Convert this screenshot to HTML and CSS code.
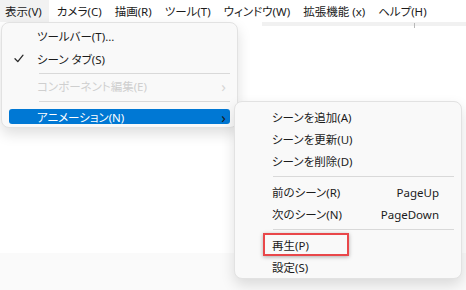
FILE: index.html
```html
<!DOCTYPE html>
<html lang="ja">
<head>
  <meta charset="UTF-8" />
  <title>メニュー</title>
  <link rel="stylesheet" href="styles.css">
</head>
<body>
  <div class="menubar">
    <div class="menubar-item active">表示(V)</div>
    <div class="menubar-item">カメラ(C)</div>
    <div class="menubar-item">描画(R)</div>
    <div class="menubar-item">ツール(T)</div>
    <div class="menubar-item">ウィンドウ(W)</div>
    <div class="menubar-item">拡張機能 (x)</div>
    <div class="menubar-item">ヘルプ(H)</div>
  </div>

  <div class="workspace">
    <div class="toolstrip"><span class="tick"></span></div>
    <div class="canvas"></div>
    <div class="footer-strip"></div>

    <!-- 表示 menu -->
    <div class="menu menu-view">
      <div class="item tall"><span class="check"></span><span class="label">ツールバー(T)...</span></div>
      <div class="item tall">
        <span class="check">
          <svg width="10" height="9" viewBox="0 0 10 9"><path d="M1 4.8 L3.8 7.6 L9 1.2" fill="none" stroke="#2a2a2a" stroke-width="1.3" stroke-linecap="round" stroke-linejoin="round"/></svg>
        </span>
        <span class="label">シーン タブ(S)</span>
      </div>
      <div class="sep sep-a"></div>
      <div class="item short disabled"><span class="check"></span><span class="label">コンポーネント編集(E)</span><span class="arrow">&#8250;</span></div>
      <div class="sep sep-b"></div>
      <div class="item hl"><span class="check"></span><span class="label">アニメーション(N)</span><span class="arrow">&#8250;</span></div>
    </div>

    <!-- アニメーション submenu -->
    <div class="menu menu-anim">
      <div class="item"><span class="label">シーンを追加(A)</span></div>
      <div class="item"><span class="label">シーンを更新(U)</span></div>
      <div class="item"><span class="label">シーンを削除(D)</span></div>
      <div class="sep"></div>
      <div class="item"><span class="label">前のシーン(R)</span><span class="key">PageUp</span></div>
      <div class="item"><span class="label">次のシーン(N)</span><span class="key">PageDown</span></div>
      <div class="sep"></div>
      <div class="item marked"><span class="label">再生(P)</span></div>
      <div class="item"><span class="label">設定(S)</span></div>
    </div>
  </div>
</body>
</html>
```

FILE: styles.css
```css
body {
  margin: 0;
  width: 466px;
  height: 290px;
  overflow: hidden;
  background: #ffffff;
  font-family: 'Noto Sans', 'Noto Sans CJK JP', sans-serif;
  font-size: 11.5px;
  font-feature-settings: 'palt';
  color: #1b1b1b;
}

.menubar {
  display: flex;
  height: 22px;
  align-items: stretch;
  background: #ffffff;
}

.menubar-item {
  display: flex;
  align-items: center;
  padding: 0 5px 0 5px;
  margin-right: 3px;
  white-space: nowrap;
}

.menubar-item.active {
  background: #f2f2f2;
  padding-right: 7px;
}

.workspace {
  position: relative;
  height: 268px;
  display: flex;
  flex-direction: column;
}

.toolstrip {
  position: relative;
  height: 4px;
  margin-left: 262px;
  background: #f1f1f1;
}

.tick {
  position: absolute;
  left: 152px;
  top: 1px;
  width: 1px;
  height: 5px;
  background: #b8b8b8;
}

.canvas {
  flex: 1;
  background: #ffffff;
}

.footer-strip {
  height: 37px;
  background: #fafafa;
}

/* popup menus */
.menu {
  position: absolute;
  box-sizing: border-box;
  background: #f9f9f9;
  border: 1px solid #e2e2e2;
  border-radius: 8px;
  box-shadow: 0 6px 14px rgba(0, 0, 0, 0.13);
}

.menu-view {
  left: 1px;
  top: 0;
  width: 237px;
  height: 106px;
  padding-top: 1px;
}

.menu-anim {
  left: 234px;
  top: 79px;
  width: 228px;
  height: 178px;
  padding-top: 4px;
}

.item {
  position: relative;
  display: flex;
  align-items: center;
  height: 22px;
  padding: 0 22px 0 37px;
  white-space: nowrap;
}

.menu-view .item {
  padding-left: 0;
  padding-right: 11px;
}

.item.tall {
  height: 23px;
}

.item.short {
  height: 18px;
}

.check {
  display: flex;
  justify-content: center;
  align-items: center;
  width: 33px;
  padding-right: 2px;
}

.label {
  flex: 1;
}

.arrow {
  font-size: 15px;
  line-height: 12px;
  color: #444;
}

.disabled {
  color: #cfcfcf;
}

.disabled .arrow {
  color: #d6d6d6;
}

.item.hl {
  height: 15px;
  margin: 2px 7px 0 7px;
  padding-left: 0;
  padding-right: 4px;
  background: #0078d4;
  border-radius: 3px;
  color: #ffffff;
}

.item.hl .check {
  width: 26px;
}

.item.hl .arrow {
  color: #1b1b1b;
}

.key {
  color: #1b1b1b;
}

.sep {
  height: 9px;
  position: relative;
}

.sep::after {
  content: '';
  position: absolute;
  left: 38px;
  right: 7px;
  top: 4px;
  height: 1px;
  background: #d9d9d9;
}

.menu-view .sep::after {
  left: 37px;
  right: 7px;
}

.sep-a {
  height: 7px;
}

.sep-a::after {
  top: 3px;
}

.sep-b {
  height: 12px;
}

.sep-b::after {
  top: 6px;
}

/* red highlight frame drawn over the 再生 row */
.item.marked::before {
  content: '';
  position: absolute;
  box-sizing: border-box;
  left: 28px;
  top: -1px;
  width: 86px;
  height: 23px;
  border: 2.5px solid #e9474a;
  box-shadow: 0 1px 4px rgba(0, 0, 0, 0.3);
}
```
